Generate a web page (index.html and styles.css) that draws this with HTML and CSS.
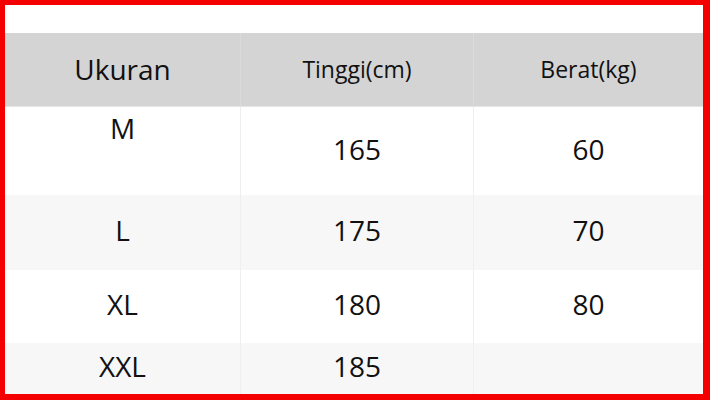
FILE: index.html
```html
<!DOCTYPE html>
<html>
<head>
<meta charset="utf-8">
<link rel="stylesheet" href="styles.css">
</head>
<body>
<div class="frame">
  <div class="table">
    <div class="cell head first">Ukuran</div>
    <div class="cell head small">Tinggi(cm)</div>
    <div class="cell head small">Berat(kg)</div>

    <div class="cell r1 first top">M</div>
    <div class="cell r1">165</div>
    <div class="cell r1">60</div>

    <div class="cell r2 alt first">L</div>
    <div class="cell r2 alt">175</div>
    <div class="cell r2 alt">70</div>

    <div class="cell r3 first">XL</div>
    <div class="cell r3">180</div>
    <div class="cell r3">80</div>

    <div class="cell r4 alt first">XXL</div>
    <div class="cell r4 alt">185</div>
    <div class="cell r4 alt"></div>
  </div>
</div>
</body>
</html>
```

FILE: styles.css
```css
html, body {
  margin: 0;
  padding: 0;
  background: #ff0000;
}
.frame {
  box-sizing: border-box;
  width: 710px;
  height: 400px;
  border-style: solid;
  border-color: #f40000;
  border-width: 5px 7px 6px 5px;
  background: #ffffff;
  padding-top: 28px;
  overflow: hidden;
  font-family: "Open Sans", "Noto Sans", sans-serif;
  color: #111111;
}
.table {
  display: grid;
  grid-template-columns: 235px 233px 230px;
  grid-template-rows: 74px 88px 75px 73px 60px;
}
.cell {
  display: flex;
  align-items: center;
  justify-content: center;
  font-size: 28px;
  padding-bottom: 5px;
  border-left: 1px solid #efefef;
}
.cell.first {
  border-left: none;
}
.head {
  background: #d4d4d4;
  border-left: 1px solid #dbdbdb;
  border-bottom: 1px solid #e6e6e6;
  font-size: 28px;
  padding-bottom: 2px;
}
.head.small {
  font-size: 23px;
}
.alt {
  background: #f7f7f7;
}
.top {
  align-items: flex-start;
  padding-top: 2px;
  padding-bottom: 0;
}
.r4 {
  align-items: flex-start;
  padding-top: 4px;
  padding-bottom: 0;
}
```
